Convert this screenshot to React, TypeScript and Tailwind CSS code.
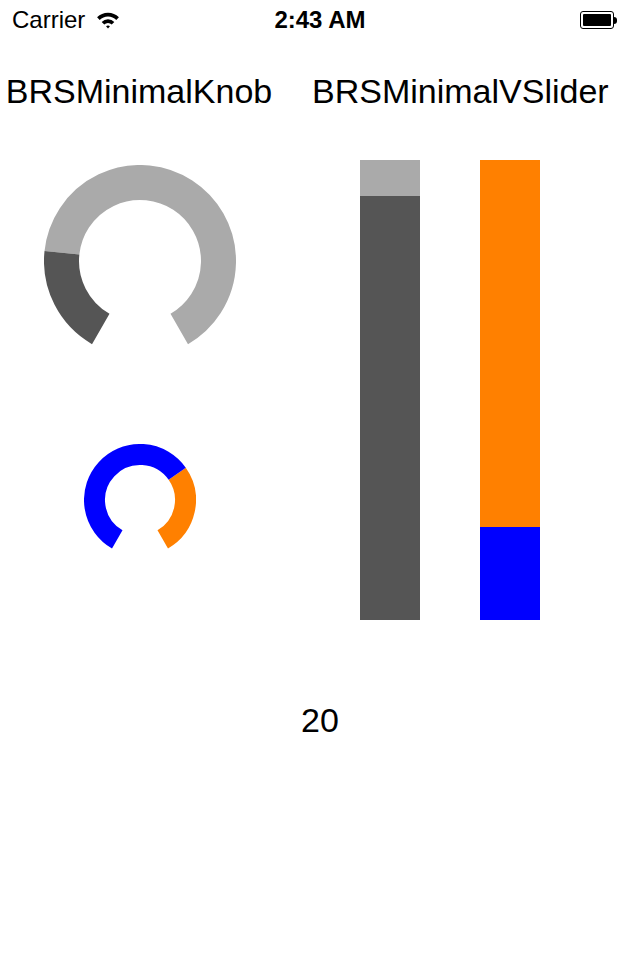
import React from 'react';

const font = { fontFamily: '"Liberation Sans", Arial, sans-serif' };

// angle in degrees, screen coords (0 = right, 90 = down)
const pt = (cx: number, cy: number, r: number, a: number) => {
  const rad = (a * Math.PI) / 180;
  return [cx + r * Math.cos(rad), cy + r * Math.sin(rad)];
};

const arc = (cx: number, cy: number, r: number, a0: number, a1: number) => {
  const [x0, y0] = pt(cx, cy, r, a0);
  const [x1, y1] = pt(cx, cy, r, a1);
  const large = a1 - a0 > 180 ? 1 : 0;
  return `M ${x0} ${y0} A ${r} ${r} 0 ${large} 1 ${x1} ${y1}`;
};

const Knob = ({ size, stroke, value, fill, track }: { size: number; stroke: number; value: number; fill: string; track: string }) => {
  const c = size / 2;
  const r = c - stroke / 2;
  const split = 120 + 300 * value;
  return (
    <svg width={size} height={size} viewBox={`0 0 ${size} ${size}`}>
      <path d={arc(c, c, r, split, 420)} stroke={track} strokeWidth={stroke} fill="none" />
      <path d={arc(c, c, r, 120, split)} stroke={fill} strokeWidth={stroke} fill="none" />
    </svg>
  );
};

const StatusBar = () => (
  <div className="h-10 flex items-center justify-between pl-3 pr-[23px] text-[24px] text-black relative" style={font}>
    <div className="flex items-center gap-[11px]">
      <span>Carrier</span>
      <svg width="24" height="18" viewBox="0 0 22 16">
        <path d="M1 5.5 A14 14 0 0 1 21 5.5 L18.6 8 A10.5 10.5 0 0 0 3.4 8 Z" fill="#000" />
        <path d="M5.2 9.8 A8 8 0 0 1 16.8 9.8 L14.4 12.2 A4.6 4.6 0 0 0 7.6 12.2 Z" fill="#000" />
        <path d="M9.2 13.8 A2.6 2.6 0 0 1 12.8 13.8 L11 15.8 Z" fill="#000" />
      </svg>
    </div>
    <span className="absolute left-0 right-0 text-center font-bold pointer-events-none">2:43 AM</span>
    <div className="flex items-center">
      <div className="w-[34px] h-[18px] border-[1.5px] border-black rounded-[3px] p-[2px]">
        <div className="w-full h-full bg-black rounded-[1px]" />
      </div>
      <div className="w-[3px] h-[7px] bg-black rounded-r-sm" />
    </div>
  </div>
);

export default function App() {
  return (
    <div className="w-[640px] h-[960px] bg-white text-black" style={font}>
      <StatusBar />
      <div className="flex mt-[32px]">
        <div className="w-[280px] flex flex-col items-center">
          <div className="text-[34px] leading-[38px] ml-[-2px]">BRSMinimalKnob</div>
          <div className="mt-[55px]">
            <Knob size={192} stroke={35} value={0.22} fill="#555555" track="#aaaaaa" />
          </div>
          <div className="mt-[87px]">
            <Knob size={112} stroke={21} value={0.683} fill="#0000ff" track="#ff8000" />
          </div>
        </div>
        <div className="flex-1 flex flex-col pl-[32px]">
          <div className="text-[34px] leading-[38px]">BRSMinimalVSlider</div>
          <div className="flex gap-[60px] mt-[50px] pl-[48px]">
            <div className="w-[60px] h-[460px] flex flex-col">
              <div className="h-[36px] bg-[#aaaaaa]" />
              <div className="flex-1 bg-[#555555]" />
            </div>
            <div className="w-[60px] h-[460px] flex flex-col">
              <div className="h-[367px] bg-[#ff8000]" />
              <div className="flex-1 bg-[#0000ff]" />
            </div>
          </div>
        </div>
      </div>
      <div className="text-center text-[34px] leading-[40px] mt-[80px]">20</div>
    </div>
  );
}
